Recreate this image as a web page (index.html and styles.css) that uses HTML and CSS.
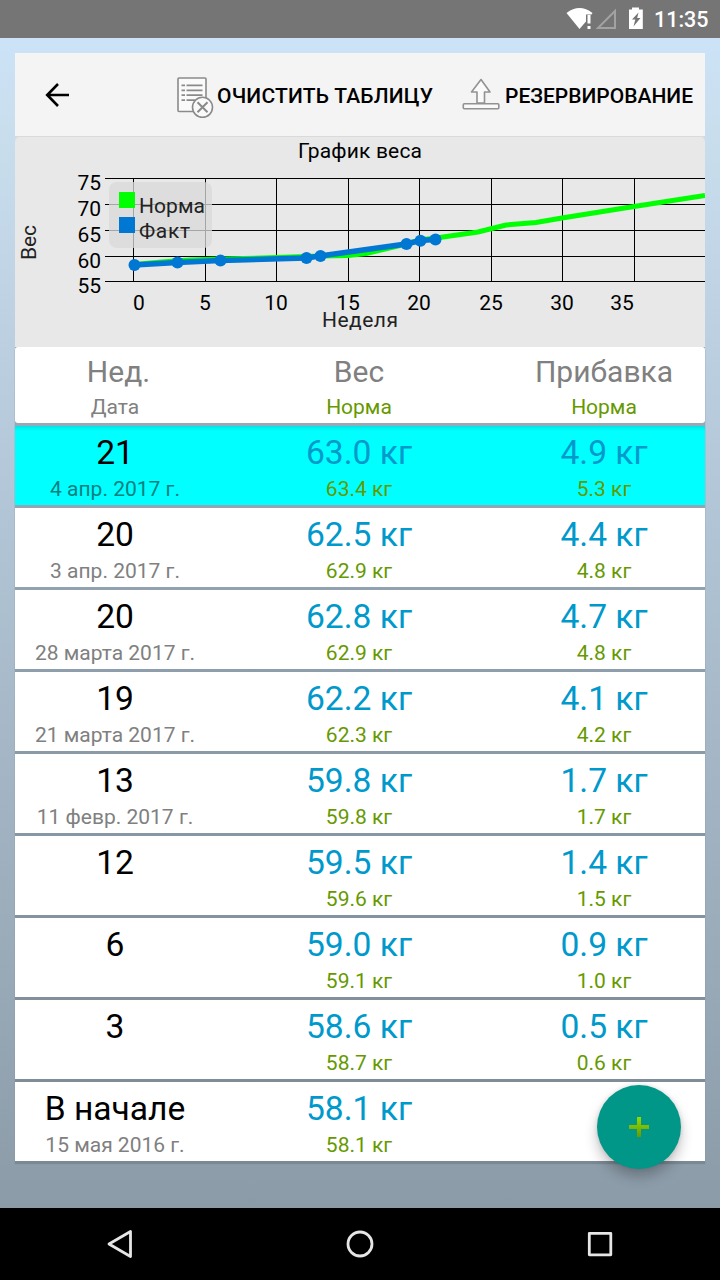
FILE: index.html
```html
<!DOCTYPE html>
<html lang="ru">
<head>
<meta charset="utf-8">
<title>График веса</title>
<link rel="stylesheet" href="styles.css">
</head>
<body>
<div class="screen">
  <header class="status">
    <svg class="status-icons" width="80" height="38" viewBox="566 0 80 38">
      <path d="M566.500 13 Q579.500 3 592.500 13 L591.500 14.500 H586 V21.500 L579.500 29 Z" fill="#fff"/>
      <path d="M587.500 15h3v8.500h-3zM587.500 26h3v3h-3z" fill="#fff"/>
      <path d="M598 28 H615 V11 Z" fill="none" stroke="#a2a2a2" stroke-width="2"/>
      <path d="M629 9.500h3V7.500h7v2h3.800V29H629z" fill="#fff"/>
      <path d="M638.500 12.500l-6.500 7h3.300l-1.800 7 7-8.500h-3.300z" fill="#757575"/>
    </svg>
    <span class="clock">11:35</span>
  </header>
  <main class="page">
    <nav class="toolbar">
      <svg class="back" width="26" height="26" viewBox="45 82 26 26"><path d="M69 95H47.500M58 84L47.200 95 58 106" fill="none" stroke="#000" stroke-width="2.600"/></svg>
      <button class="action clear">
        <svg width="38" height="42" viewBox="176 77 38 42" fill="none" stroke="#8a8a8a">
          <rect x="178" y="78" width="28" height="33.500" rx="1" fill="#fafafa" stroke-width="1.600"/>
          <path d="M181.500 85.300h3.500m1.500 0h16M181.500 90.300h3.500m1.500 0h16M181.500 95.200h3.500m1.500 0h16M181.500 100.200h3.500m1.500 0h9" stroke-width="1.800"/>
          <circle cx="202.500" cy="107.300" r="10" fill="#fafafa" stroke-width="1.600"/>
          <path d="M197.500 102.300l10 10m0-10l-10 10" stroke-width="2"/>
        </svg>
        <span>ОЧИСТИТЬ ТАБЛИЦУ</span>
      </button>
      <button class="action reserve">
        <svg width="38" height="34" viewBox="462 77 38 34" fill="#fafafa" stroke="#929292" stroke-width="1.600" stroke-linejoin="round">
          <path d="M481 79.500L490 92H484.500V103H477V92H471.500Z"/>
          <rect x="463.300" y="103.800" width="35.500" height="5" rx="1"/>
        </svg>
        <span>РЕЗЕРВИРОВАНИЕ</span>
      </button>
    </nav>
    <section class="chart">
      <svg width="690" height="211" viewBox="15 136 690 211">
        <path class="grid" d="M105 178.500H705M105 204.500H705M105 230.500H705M105 256.500H705M105 281.500H705M133.500 178V282M205.500 178V282M276.500 178V282M348.500 178V282M419.500 178V282M491.500 178V282M562.500 178V282M634.500 178V282"/>
        <polyline class="norm" points="134,264.500 162,262 190,260 220,259 262,258 306,256.500 320,256 348,255.500 366,253.500 406,244 420,240 436,238 478,232 506,225 536,222.500 562,218 634,206.500 705,195.500"/>
        <polyline class="fact" points="134,265 177,262.500 220,260.500 306,258 320,256 406,244 420.500,240.500 435,239.500"/>
        <g class="dots"><circle cx="134.500" cy="265" r="6"/><circle cx="177.500" cy="262.500" r="6"/><circle cx="220.500" cy="260.500" r="6"/><circle cx="306.500" cy="258" r="6"/><circle cx="320.500" cy="256" r="6"/><circle cx="406.500" cy="244" r="6"/><circle cx="420.500" cy="240.700" r="6"/><circle cx="435.500" cy="239.500" r="6"/></g>
        <rect x="109" y="182" width="103" height="66" rx="8" fill="#d9d9d9" fill-opacity=".76"/>
        <rect x="119" y="192" width="16" height="16" fill="#0f0"/>
        <rect x="119" y="217" width="16" height="16" fill="#0077d3"/>
        <g class="label">
          <text x="298" y="158" textLength="124" fill="#000">График веса</text>
          <text x="139" y="213" textLength="66">Норма</text>
          <text x="139" y="238" textLength="51">Факт</text>
          <text x="322" y="327" textLength="76">Неделя</text>
          <text transform="translate(36 260) rotate(-90)" textLength="35">Вес</text>
        </g>
        <g class="ticks" text-anchor="end">
          <text x="101" y="190">75</text><text x="101" y="216">70</text><text x="101" y="242">65</text><text x="101" y="268">60</text><text x="101" y="293">55</text>
        </g>
        <g class="ticks" text-anchor="middle">
          <text x="139" y="310">0</text><text x="205" y="310">5</text><text x="276" y="310">10</text><text x="348" y="310">15</text><text x="419" y="310">20</text><text x="491" y="310">25</text><text x="562" y="310">30</text><text x="622" y="310">35</text>
        </g>
      </svg>
    </section>
    <section class="table">
      <div class="row head"><div><b>Нед.</b><i>Дата</i></div><div><b>Вес</b><i>Норма</i></div><div><b>Прибавка</b><i>Норма</i></div></div>
      <div class="row current"><div><b>21</b><i>4 апр. 2017 г.</i></div><div><b>63.0 кг</b><i>63.4 кг</i></div><div><b>4.9 кг</b><i>5.3 кг</i></div></div>
      <div class="row"><div><b>20</b><i>3 апр. 2017 г.</i></div><div><b>62.5 кг</b><i>62.9 кг</i></div><div><b>4.4 кг</b><i>4.8 кг</i></div></div>
      <div class="row"><div><b>20</b><i>28 марта 2017 г.</i></div><div><b>62.8 кг</b><i>62.9 кг</i></div><div><b>4.7 кг</b><i>4.8 кг</i></div></div>
      <div class="row"><div><b>19</b><i>21 марта 2017 г.</i></div><div><b>62.2 кг</b><i>62.3 кг</i></div><div><b>4.1 кг</b><i>4.2 кг</i></div></div>
      <div class="row"><div><b>13</b><i>11 февр. 2017 г.</i></div><div><b>59.8 кг</b><i>59.8 кг</i></div><div><b>1.7 кг</b><i>1.7 кг</i></div></div>
      <div class="row"><div><b>12</b></div><div><b>59.5 кг</b><i>59.6 кг</i></div><div><b>1.4 кг</b><i>1.5 кг</i></div></div>
      <div class="row"><div><b>6</b></div><div><b>59.0 кг</b><i>59.1 кг</i></div><div><b>0.9 кг</b><i>1.0 кг</i></div></div>
      <div class="row"><div><b>3</b></div><div><b>58.6 кг</b><i>58.7 кг</i></div><div><b>0.5 кг</b><i>0.6 кг</i></div></div>
      <div class="row"><div><b>В начале</b><i>15 мая 2016 г.</i></div><div><b>58.1 кг</b><i>58.1 кг</i></div><div></div></div>
    </section>
    <button class="fab">
      <svg width="20" height="20" viewBox="0 0 20 20"><defs><linearGradient id="plus" x2="0" y2="1"><stop stop-color="#93dc00"/><stop offset="1" stop-color="#679900"/></linearGradient></defs><path d="M8 0h4v8H20v4h-8V20H8v-8H0V8h8z" fill="url(#plus)"/></svg>
    </button>
  </main>
  <footer class="navbar">
    <svg width="240" height="72" viewBox="0 0 240 72"><path d="M130.500 23.500V48.500L109 36Z"/></svg>
    <svg width="240" height="72" viewBox="0 0 240 72"><circle cx="120" cy="36" r="12"/></svg>
    <svg width="240" height="72" viewBox="0 0 240 72"><rect x="109.300" y="25.300" width="21.500" height="21.500"/></svg>
  </footer>
</div>
</body>
</html>
```
FILE: styles.css
```css
* { box-sizing: border-box; }
body { margin: 0; font-family: Roboto, "Noto Sans", sans-serif; color: #000; }
button { border: 0; padding: 0; background: none; font: inherit; color: inherit; }
.screen { width: 720px; height: 1280px; display: flex; flex-direction: column; overflow: hidden; }
.status { height: 38px; background: #757575; color: #fff; display: flex; justify-content: flex-end; align-items: center; gap: 8px; padding-right: 12px; }
.clock { font-size: 21.5px; font-weight: 500; line-height: 38px; width: 54px; white-space: nowrap; padding-top: 2px; }
.page { position: relative; flex: 1; padding: 15px 15px 0; background: linear-gradient(#cce2f7, #c9deed 8%, #bdd1e3 24%, #8b9ba8); }
.toolbar { height: 83px; background: #f4f4f4; display: flex; align-items: center; padding: 1px 12px 0 30px; }
.back { display: block; }
.action { display: flex; align-items: center; gap: 4px; font-size: 21px; font-weight: 500; line-height: 28px; white-space: nowrap; }
.action svg { flex: none; }
.action span { padding-top: 2px; }
.clear { margin-left: 105px; gap: 3px; letter-spacing: .2px; }
.clear svg { margin-top: 5px; }
.reserve { margin-left: auto; gap: 5px; }
.reserve svg { margin-top: -3px; }
.chart { height: 211px; background: #e8e8e8; border-radius: 5px 5px 0 0; box-shadow: inset 0 1px 0 #dadada; }
.chart svg { display: block; }
.grid { stroke: #000; stroke-width: 1; fill: none; shape-rendering: crispEdges; }
.norm { fill: none; stroke: #0f0; stroke-width: 5; }
.fact { fill: none; stroke: #0077d3; stroke-width: 5.5; }
.dots { fill: #0077d3; }
.label { font-size: 21px; fill: #222; }
.ticks { font-size: 21px; fill: #000; }
.table { display: flex; flex-direction: column; gap: 3px; background: linear-gradient(#9aabba, #7c8995); box-shadow: 0 3px 1px #7c8995; }
.row { height: 79px; background: #fff; display: grid; grid-template-columns: 200px 288px 202px; text-align: center; color: #0099cc; white-space: nowrap; }
.row b, .row i { display: block; font-weight: 400; font-style: normal; }
.row b { font-size: 33.6px; line-height: 40px; padding-top: 7px; }
.row i { font-size: 21px; line-height: 24px; color: #669900; margin-top: 4px; }
.row div:first-child b { color: #000; }
.row div:first-child i { color: #808080; }
.row.head { height: 76px; border-radius: 3px; }
.row.head b { font-size: 30px; color: #808080; line-height: 36px; }
.row.head i { margin-top: 5px; }
.row.head div:first-child b { color: #808080; padding-left: 7px; }
.row.current { background: linear-gradient(#00e4e6, #0ff 5px); }
.row.current div:first-child i { color: #008080; }
.fab { position: absolute; left: 597px; top: 1047px; width: 84px; height: 84px; border-radius: 50%; background: #009688; display: grid; place-items: center; box-shadow: 0 8px 13px rgba(0,0,0,.24), 0 0 4px rgba(0,0,0,.12); }
.navbar { height: 72px; background: #000; display: flex; }
.navbar svg { fill: none; stroke: #e6e6e6; stroke-width: 2.8; stroke-linejoin: round; }
```
